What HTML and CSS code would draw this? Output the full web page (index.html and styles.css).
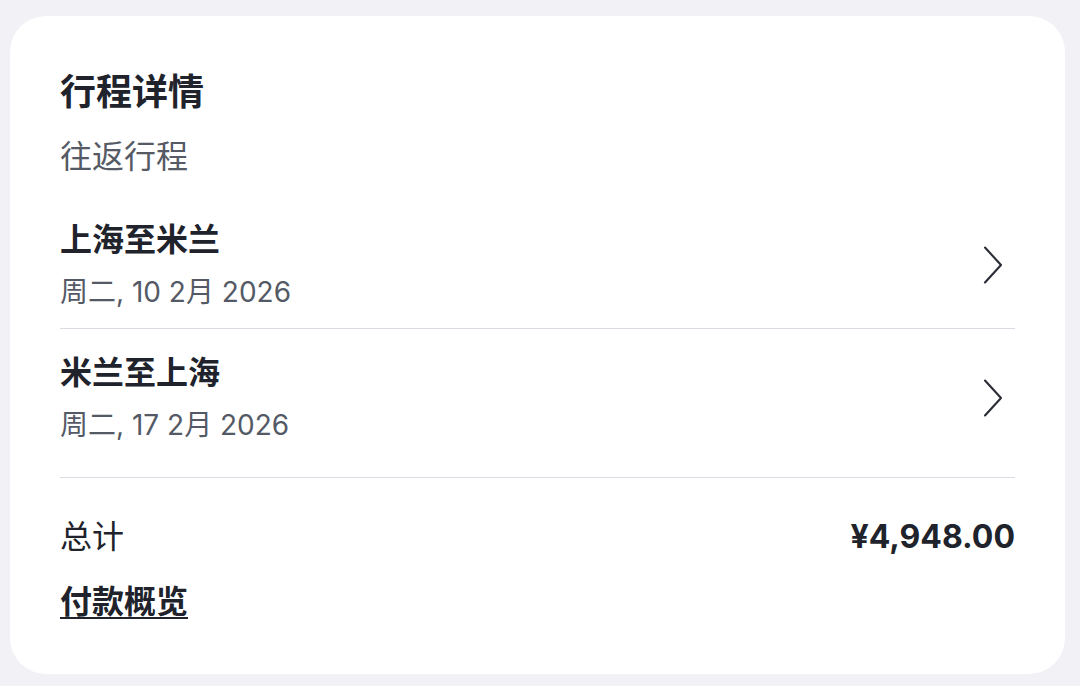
FILE: index.html
```html
<!DOCTYPE html>
<html lang="zh">
<head>
<meta charset="utf-8">
<link rel="stylesheet" href="styles.css">
</head>
<body>
<div class="page">
  <section class="card">
    <h1 class="title">行程详情</h1>
    <div class="subtitle">往返行程</div>
    <div class="trip trip-first">
      <div class="trip-info">
        <div class="trip-name">上海至米兰</div>
        <div class="trip-date">周二, 10 2月 2026</div>
      </div>
      <svg class="chevron" width="20" height="38" viewBox="0 0 20 38"><path d="M2 1.5 L18 19 L2 36.5" fill="none" stroke="#2a2d35" stroke-width="2.1" stroke-linecap="round" stroke-linejoin="round"/></svg>
    </div>
    <div class="trip trip-second">
      <div class="trip-info">
        <div class="trip-name">米兰至上海</div>
        <div class="trip-date">周二, 17 2月 2026</div>
      </div>
      <svg class="chevron" width="20" height="38" viewBox="0 0 20 38"><path d="M2 1.5 L18 19 L2 36.5" fill="none" stroke="#2a2d35" stroke-width="2.1" stroke-linecap="round" stroke-linejoin="round"/></svg>
    </div>
    <div class="total">
      <span class="total-label">总计</span>
      <span class="total-value">¥4,948.00</span>
    </div>
    <a class="link">付款概览</a>
  </section>
</div>
</body>
</html>
```

FILE: styles.css
```css
* { box-sizing: border-box; }
html, body { margin: 0; padding: 0; }
body {
  background: #f1f1f6;
  font-family: Inter, "Noto Sans CJK SC", sans-serif;
  color: #1f2129;
}
.page {
  padding: 16px 15px 12px 10px;
  height: 686px;
}
.card {
  background: #ffffff;
  border-radius: 36px;
  height: 658px;
  padding: 54px 50px 0 50px;
  display: flex;
  flex-direction: column;
}
.title {
  margin: 0;
  font-size: 36px;
  line-height: 44px;
  font-weight: 700;
  color: #20232b;
}
.subtitle {
  margin-top: 23px;
  font-size: 32px;
  line-height: 40px;
  color: #555a64;
}
.trip {
  display: flex;
  align-items: center;
  justify-content: space-between;
  border-bottom: 1px solid #d9dce3;
}
.trip-first { padding: 43px 0 18px; }
.trip-second { padding: 24px 0 34px; }
.trip-info { display: flex; flex-direction: column; gap: 14px; }
.trip-name {
  font-size: 32px;
  line-height: 40px;
  font-weight: 700;
  color: #20232b;
}
.trip-date {
  font-size: 28px;
  line-height: 36px;
  color: #545a65;
}
.chevron { margin-right: 12px; }
.total {
  display: flex;
  justify-content: space-between;
  align-items: center;
  margin-top: 39px;
}
.total-label {
  font-size: 32px;
  line-height: 40px;
  color: #20232b;
}
.total-value {
  font-size: 32px;
  line-height: 40px;
  font-weight: 700;
  color: #20232b;
}
.link {
  align-self: flex-start;
  margin-top: 25px;
  font-size: 32px;
  line-height: 40px;
  font-weight: 700;
  color: #20232b;
  text-decoration: underline;
  text-decoration-thickness: 2px;
  text-underline-offset: 4px;
}
```
